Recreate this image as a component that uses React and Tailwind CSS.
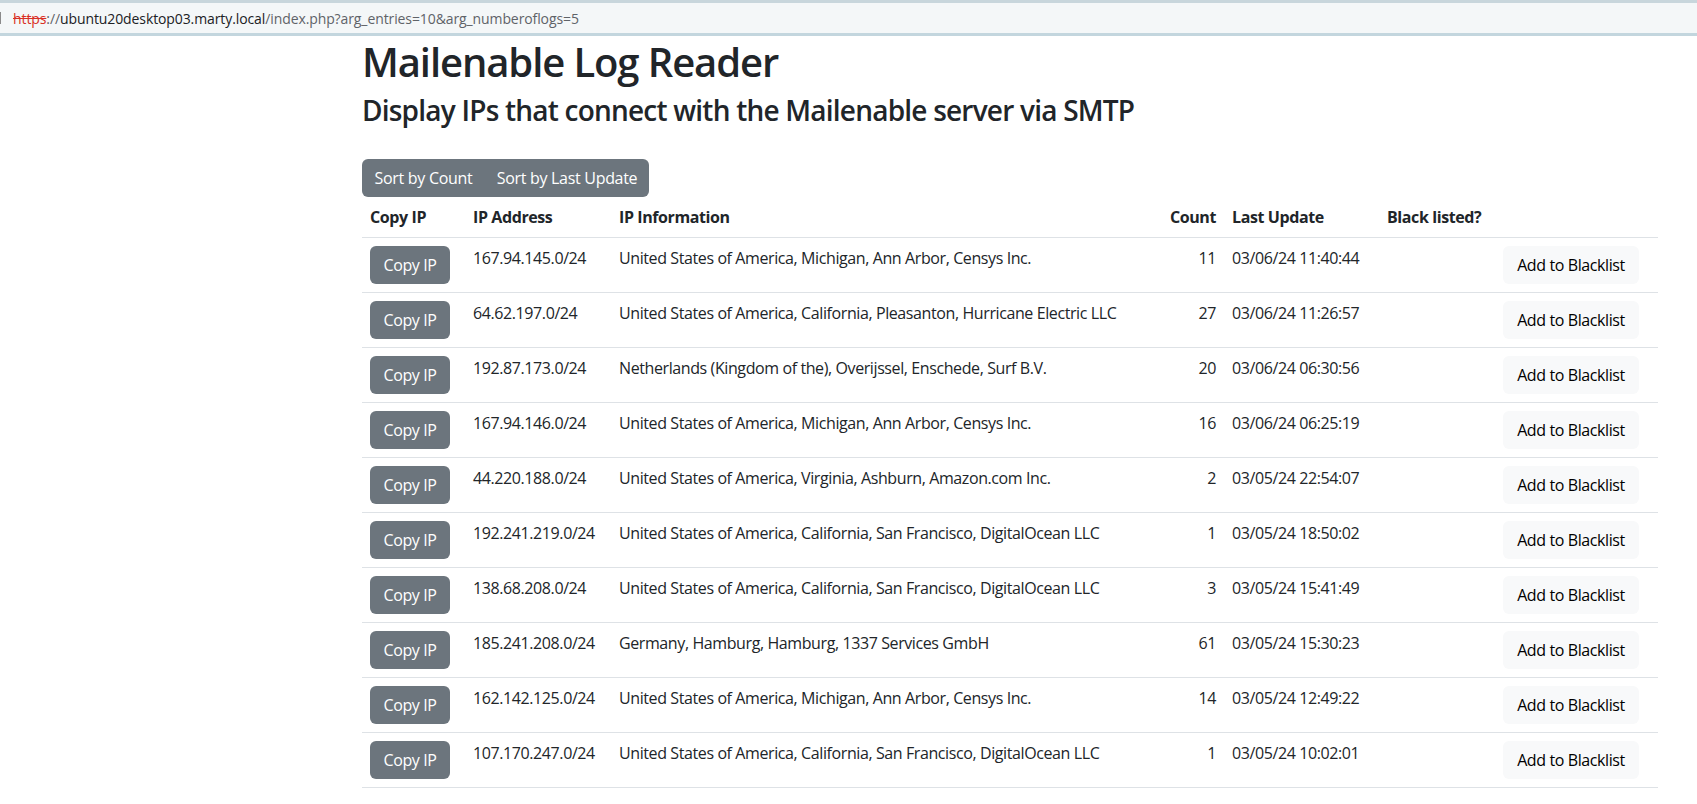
const rows = [
  ['167.94.145.0/24', 'United States of America, Michigan, Ann Arbor, Censys Inc.', 11, '03/06/24 11:40:44'],
  ['64.62.197.0/24', 'United States of America, California, Pleasanton, Hurricane Electric LLC', 27, '03/06/24 11:26:57'],
  ['192.87.173.0/24', 'Netherlands (Kingdom of the), Overijssel, Enschede, Surf B.V.', 20, '03/06/24 06:30:56'],
  ['167.94.146.0/24', 'United States of America, Michigan, Ann Arbor, Censys Inc.', 16, '03/06/24 06:25:19'],
  ['44.220.188.0/24', 'United States of America, Virginia, Ashburn, Amazon.com Inc.', 2, '03/05/24 22:54:07'],
  ['192.241.219.0/24', 'United States of America, California, San Francisco, DigitalOcean LLC', 1, '03/05/24 18:50:02'],
  ['138.68.208.0/24', 'United States of America, California, San Francisco, DigitalOcean LLC', 3, '03/05/24 15:41:49'],
  ['185.241.208.0/24', 'Germany, Hamburg, Hamburg, 1337 Services GmbH', 61, '03/05/24 15:30:23'],
  ['162.142.125.0/24', 'United States of America, Michigan, Ann Arbor, Censys Inc.', 14, '03/05/24 12:49:22'],
  ['107.170.247.0/24', 'United States of America, California, San Francisco, DigitalOcean LLC', 1, '03/05/24 10:02:01'],
];

function App() {
  return (
    <div className="min-h-screen bg-white text-[#212529] font-['Open_Sans','Noto_Sans',sans-serif]">
      {/* Address bar */}
      <div className="h-[36px] border-t-[3px] border-b-[3px] border-t-[#c8d6dc] border-b-[#c3d6de] bg-[#f4f7f8] flex items-center">
        <div className="w-px h-[12px] bg-[#8a8a8a]"></div>
        <div className="ml-[12px] text-[14px] tracking-[-0.1px] text-[#5f6368] whitespace-nowrap">
          <span className="text-[#d93025] line-through">https</span>
          <span>://</span>
          <span className="text-[#202124]">ubuntu20desktop03.marty.local</span>
          <span>/index.php?arg_entries=10&amp;arg_numberoflogs=5</span>
        </div>
      </div>

      <div className="ml-[362px] w-[1296px] pt-[2px]">
        <h1 className="text-[40px] leading-[1.2] font-semibold tracking-[-1.1px] mb-2">Mailenable Log Reader</h1>
        <h3 className="text-[28px] leading-[1.2] font-semibold tracking-[-0.78px] mb-[31px]">Display IPs that connect with the Mailenable server via SMTP</h3>

        <div className="inline-flex rounded-[6px] overflow-hidden bg-[#6c757d] text-white text-[16px] tracking-[-0.3px]">
          <button className="w-[123px] h-[38px] text-center">Sort by Count</button>
          <button className="w-[164px] h-[38px] text-center">Sort by Last Update</button>
        </div>

        <table className="w-[1296px] table-fixed border-collapse text-[16px] leading-[24px] tracking-[-0.4px]">
          <colgroup>
            <col className="w-[103px]" />
            <col className="w-[146px]" />
            <col className="w-[539px]" />
            <col className="w-[74px]" />
            <col className="w-[155px]" />
            <col className="w-[116px]" />
            <col className="w-[163px]" />
          </colgroup>
          <thead>
            <tr className="border-b border-[#dee2e6] align-bottom">
              <th className="p-2 text-left font-bold">Copy IP</th>
              <th className="p-2 text-left font-bold">IP Address</th>
              <th className="p-2 text-left font-bold">IP Information</th>
              <th className="p-2 text-right font-bold">Count</th>
              <th className="p-2 text-left font-bold">Last Update</th>
              <th className="p-2 text-left font-bold whitespace-nowrap">Black listed?</th>
              <th className="p-2"></th>
            </tr>
          </thead>
          <tbody>
            {rows.map((r) => (
              <tr key={r[0]} className="border-b border-[#dee2e6] align-top">
                <td className="p-2">
                  <button className="w-[80px] h-[38px] rounded-[6px] bg-[#6c757d] text-white">Copy IP</button>
                </td>
                <td className="p-2 whitespace-nowrap">{r[0]}</td>
                <td className="p-2 whitespace-nowrap">{r[1]}</td>
                <td className="p-2 text-right">{r[2]}</td>
                <td className="p-2 whitespace-nowrap">{r[3]}</td>
                <td className="p-2"></td>
                <td className="p-2">
                  <button className="w-[136px] h-[38px] rounded-[6px] bg-[#f8f9fa] text-black whitespace-nowrap">Add to Blacklist</button>
                </td>
              </tr>
            ))}
          </tbody>
        </table>
      </div>
    </div>
  );
}

export default App;
